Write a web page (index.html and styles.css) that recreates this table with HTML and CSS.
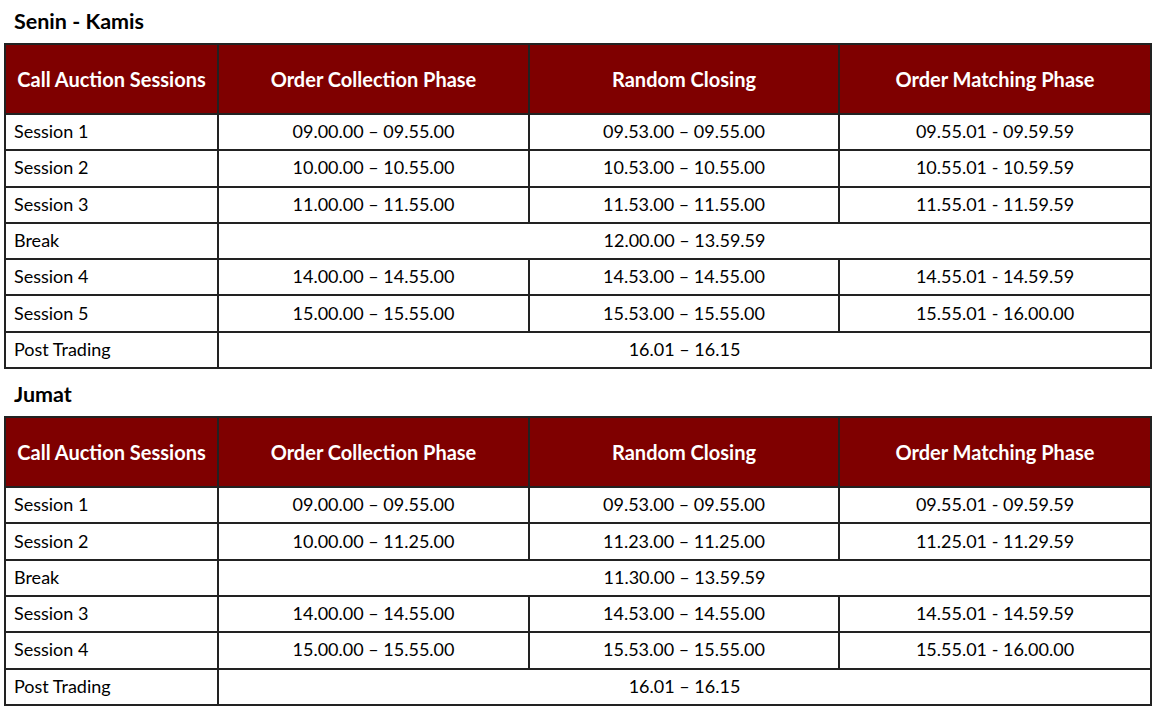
FILE: index.html
```html
<!DOCTYPE html>
<html>
<head>
<meta charset="utf-8">
<link rel="stylesheet" href="styles.css">
</head>
<body>
<div class="page">
  <h2 class="day first">Senin - Kamis</h2>
  <table class="sched">
    <colgroup><col class="c1"><col class="c2"><col class="c3"><col class="c4"></colgroup>
    <thead>
      <tr><th>Call Auction Sessions</th><th>Order Collection Phase</th><th>Random Closing</th><th>Order Matching Phase</th></tr>
    </thead>
    <tbody>
      <tr><td class="lbl">Session 1</td><td>09.00.00 – 09.55.00</td><td>09.53.00 – 09.55.00</td><td>09.55.01 - 09.59.59</td></tr>
      <tr><td class="lbl">Session 2</td><td>10.00.00 – 10.55.00</td><td>10.53.00 – 10.55.00</td><td>10.55.01 - 10.59.59</td></tr>
      <tr><td class="lbl">Session 3</td><td>11.00.00 – 11.55.00</td><td>11.53.00 – 11.55.00</td><td>11.55.01 - 11.59.59</td></tr>
      <tr><td class="lbl">Break</td><td colspan="3">12.00.00 – 13.59.59</td></tr>
      <tr><td class="lbl">Session 4</td><td>14.00.00 – 14.55.00</td><td>14.53.00 – 14.55.00</td><td>14.55.01 - 14.59.59</td></tr>
      <tr><td class="lbl">Session 5</td><td>15.00.00 – 15.55.00</td><td>15.53.00 – 15.55.00</td><td>15.55.01 - 16.00.00</td></tr>
      <tr><td class="lbl">Post Trading</td><td colspan="3">16.01 – 16.15</td></tr>
    </tbody>
  </table>
  <h2 class="day second">Jumat</h2>
  <table class="sched">
    <colgroup><col class="c1"><col class="c2"><col class="c3"><col class="c4"></colgroup>
    <thead>
      <tr><th>Call Auction Sessions</th><th>Order Collection Phase</th><th>Random Closing</th><th>Order Matching Phase</th></tr>
    </thead>
    <tbody>
      <tr><td class="lbl">Session 1</td><td>09.00.00 – 09.55.00</td><td>09.53.00 – 09.55.00</td><td>09.55.01 - 09.59.59</td></tr>
      <tr><td class="lbl">Session 2</td><td>10.00.00 – 11.25.00</td><td>11.23.00 – 11.25.00</td><td>11.25.01 - 11.29.59</td></tr>
      <tr><td class="lbl">Break</td><td colspan="3">11.30.00 – 13.59.59</td></tr>
      <tr><td class="lbl">Session 3</td><td>14.00.00 – 14.55.00</td><td>14.53.00 – 14.55.00</td><td>14.55.01 - 14.59.59</td></tr>
      <tr><td class="lbl">Session 4</td><td>15.00.00 – 15.55.00</td><td>15.53.00 – 15.55.00</td><td>15.55.01 - 16.00.00</td></tr>
      <tr><td class="lbl">Post Trading</td><td colspan="3">16.01 – 16.15</td></tr>
    </tbody>
  </table>
</div>
</body>
</html>
```
FILE: styles.css
```css
html, body {
  margin: 0;
  padding: 0;
  background: #ffffff;
}
body {
  font-family: Lato, "Open Sans", sans-serif;
  color: #000;
}
.page {
  padding: 0 2px 0 4px;
  width: 1146px;
}
.day {
  margin: 0;
  padding-left: 10px;
  font-size: 21.5px;
  font-weight: 700;
  line-height: 43px;
  height: 43px;
}
.day.second {
  padding-top: 4px;
}
.sched {
  border-collapse: collapse;
  table-layout: fixed;
  width: 1146px;
  border: 2px solid #222;
}
.c1 { width: 213px; }
.c2 { width: 311px; }
.c3 { width: 310px; }
.c4 { width: 312px; }
.sched th, .sched td {
  border: 2px solid #222;
  padding: 0;
  font-size: 18px;
  text-align: center;
  white-space: nowrap;
}
.sched th {
  background: #7f0000;
  color: #fff;
  font-weight: 700;
  font-size: 20px;
  height: 68px;
}
.sched td {
  height: 32.3px;
  padding-bottom: 2px;
}
.sched td.lbl {
  text-align: left;
  padding-left: 8px;
}
```
